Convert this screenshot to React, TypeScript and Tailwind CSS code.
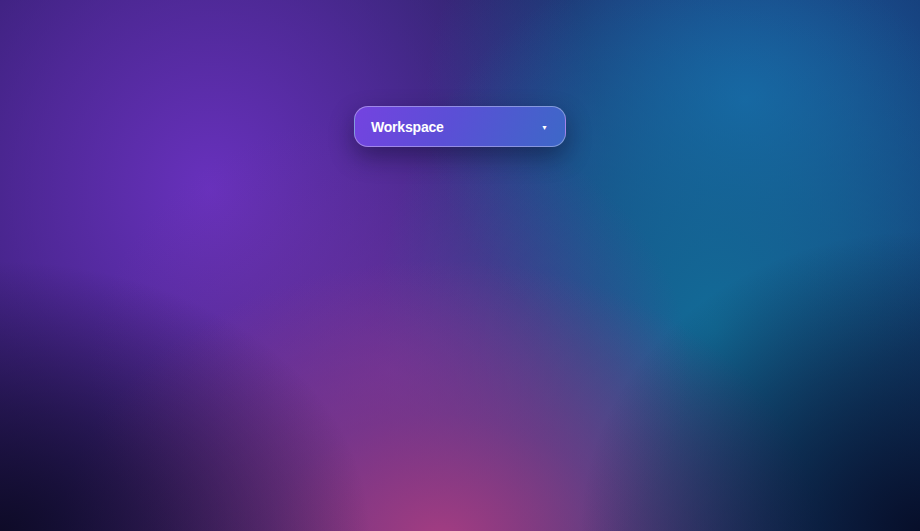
import React from "react";

const App: React.FC = () => {
  return (
    <div
      className="relative w-full h-[531px] overflow-hidden bg-[linear-gradient(90deg,#2c1c66_0%,#25235f_50%,#152f68_100%)]"
      style={{ fontFamily: "'Liberation Sans', Arial, sans-serif" }}
    >
      {/* background glows */}
      <div className="absolute inset-0 bg-[radial-gradient(ellipse_400px_450px_at_210px_190px,#6831bd_0%,rgba(98,46,178,0.65)_45%,rgba(90,40,160,0)_100%)]" />
      <div className="absolute inset-0 bg-[radial-gradient(ellipse_320px_290px_at_745px_100px,#1a66aa_0%,rgba(26,100,168,0.55)_45%,rgba(26,100,168,0)_100%)]" />
      <div className="absolute inset-0 bg-[radial-gradient(ellipse_340px_380px_at_715px_330px,#126c98_0%,rgba(18,108,152,0.6)_45%,rgba(18,108,152,0)_100%)]" />
      <div className="absolute inset-0 bg-[radial-gradient(ellipse_300px_260px_at_390px_370px,rgba(112,52,160,0.7)_0%,rgba(112,52,160,0)_100%)]" />
      <div className="absolute inset-0 bg-[radial-gradient(ellipse_380px_280px_at_440px_540px,#a43d82_0%,rgba(140,58,135,0.6)_45%,rgba(140,58,135,0)_100%)]" />
      <div className="absolute inset-0 bg-[radial-gradient(ellipse_370px_270px_at_0px_531px,rgba(12,10,36,0.95)_0%,rgba(12,10,36,0.55)_45%,rgba(12,10,36,0)_100%)]" />
      <div className="absolute inset-0 bg-[radial-gradient(ellipse_340px_300px_at_920px_531px,rgba(6,12,38,0.95)_0%,rgba(6,12,38,0.55)_45%,rgba(6,12,38,0)_100%)]" />

      <div className="relative flex justify-center pt-[106px]">
        <button
          type="button"
          className="flex items-center justify-between w-[212px] h-[41px] pl-4 pr-[17px] rounded-[14px] border border-white/35 bg-[linear-gradient(110deg,#7443e0_0%,#5b4fd6_45%,#3d68c8_100%)] shadow-[0_10px_24px_rgba(10,10,40,0.45)] text-white"
        >
          <span className="mt-px text-[14px] font-bold tracking-[-0.2px]">
            Workspace
          </span>
          <span className="mt-px text-[7px] leading-none">▼</span>
        </button>
      </div>
    </div>
  );
};

export default App;
